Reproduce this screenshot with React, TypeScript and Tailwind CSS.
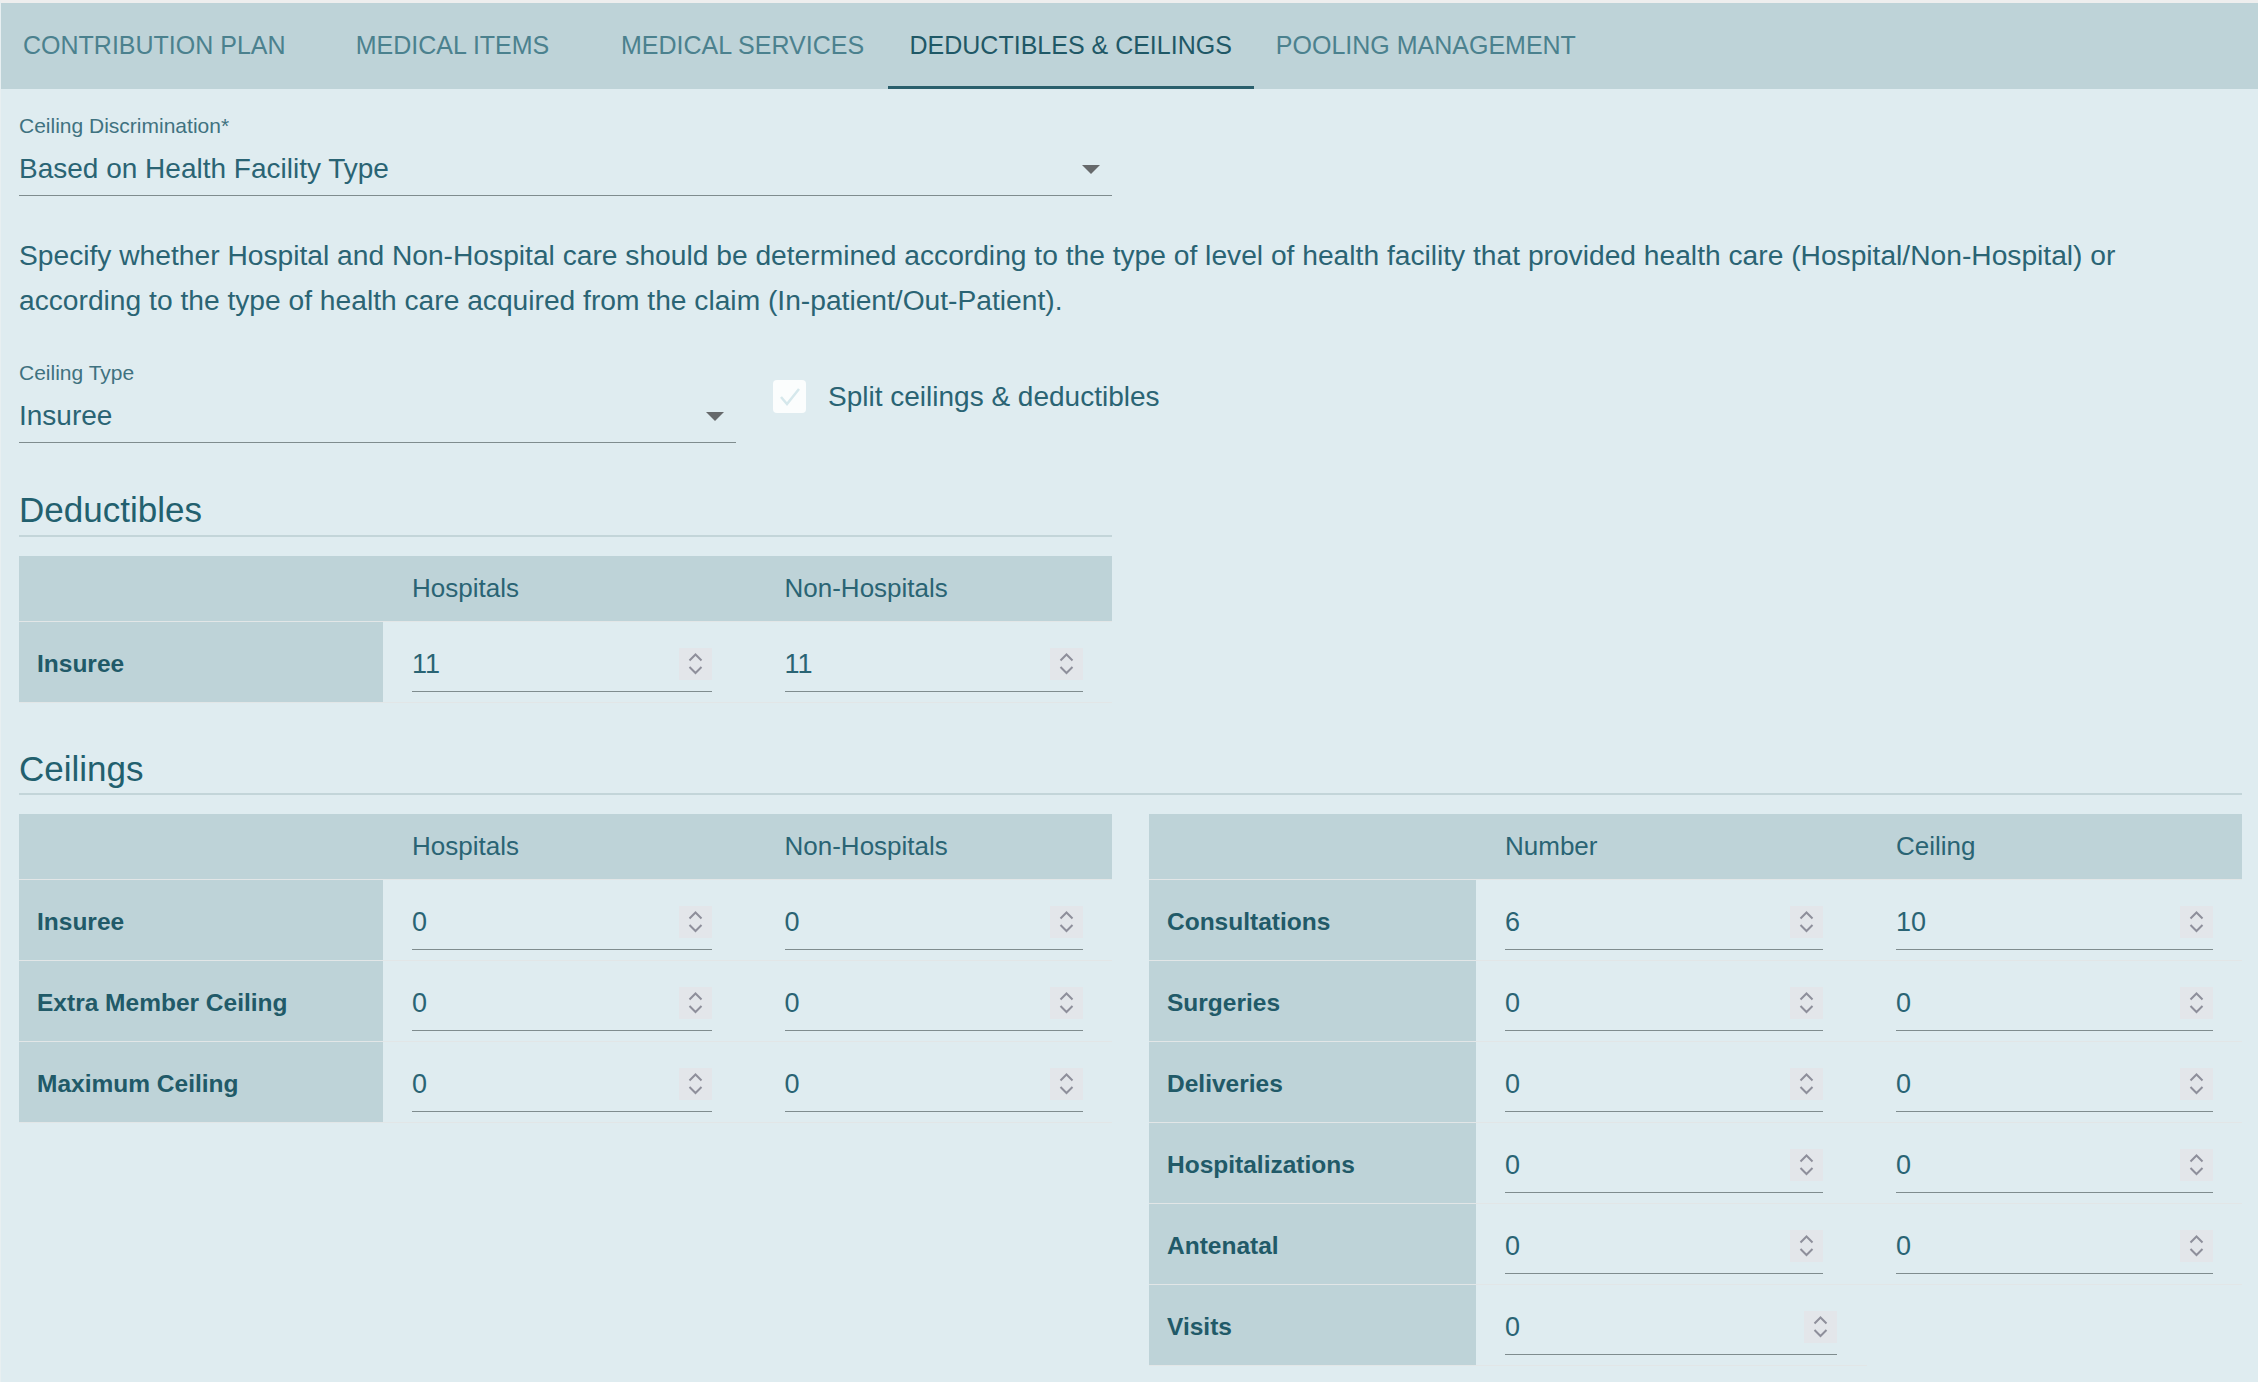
import clsx from "clsx";

const tabs = [
    "Contribution Plan",
    "Medical Items",
    "Medical Services",
    "Deductibles & Ceilings",
    "Pooling Management",
];

const Spinner = () => (
    <span className="flex h-[32px] w-[33px] shrink-0 items-center justify-center bg-[#e3e6ea]">
        <svg width="33" height="32" viewBox="0 0 33 32" fill="none" stroke="#8e8f9b" strokeWidth="2">
            <polyline points="10.5,12.5 16.5,6.5 22.5,12.5" />
            <polyline points="10.5,19 16.5,25 22.5,19" />
        </svg>
    </span>
);

const NumberField = ({ value }: { value: string }) => (
    <div className="flex h-[47px] items-center justify-between border-b border-[#7f8c8e] pb-[8px] text-[27px] text-[#2a6474]">
        <span>{value}</span>
        <Spinner />
    </div>
);

const SelectField = ({ label, value, width }: { label: string; value: string; width: string }) => (
    <div className={width}>
        <p className="text-[21px] leading-[24px] text-[#3f7280]">{label}</p>
        <div className="mt-[9px] flex h-[49px] items-center justify-between border-b border-[#7f8c8e] pb-[4px]">
            <span className="text-[28px] text-[#2a6474]">{value}</span>
            <svg width="18" height="9" viewBox="0 0 18 9" className="mr-[12px]">
                <polygon points="0,0 18,0 9,9" fill="#66696b" />
            </svg>
        </div>
    </div>
);

type Row = { label: string; values: string[] };

const ValueTable = ({ cols, headers, rows }: { cols: string; headers: string[]; rows: Row[] }) => (
    <div className="w-[1093px]">
        <div className={clsx("grid h-[66px] items-center border-b border-[#e2e6e7] bg-[#bed3d8] text-[26px] text-[#2a6474]", cols)}>
            <div />
            <p className="pl-[29px] pr-[36px]">{headers[0]}</p>
            <p className="pl-[37px] pr-[29px]">{headers[1]}</p>
        </div>
        {rows.map((row, index) =>
            row.values.length === 2 ? (
                <div key={index} className={clsx("grid h-[81px] border-b border-[#e2e6e7]", cols)}>
                    <div className="flex items-center bg-[#bed3d8] pl-[18px] pt-[4px] text-[24.5px] font-bold text-[#215a68]">
                        {row.label}
                    </div>
                    <div className="pl-[29px] pr-[36px] pt-[23px]">
                        <NumberField value={row.values[0]} />
                    </div>
                    <div className="pl-[37px] pr-[29px] pt-[23px]">
                        <NumberField value={row.values[1]} />
                    </div>
                </div>
            ) : (
                <div key={index} className="grid h-[81px] w-[718px] grid-cols-[327px_391px] border-b border-[#e2e6e7]">
                    <div className="flex items-center bg-[#bed3d8] pl-[18px] pt-[4px] text-[24.5px] font-bold text-[#215a68]">
                        {row.label}
                    </div>
                    <div className="pl-[29px] pr-[30px] pt-[23px]">
                        <NumberField value={row.values[0]} />
                    </div>
                </div>
            )
        )}
    </div>
);

const App = () => {
    return (
        <div className="min-h-screen border-l border-t-[3px] border-l-[#e8eff1] border-t-[#eeeeee] bg-[#dfecf0] font-[family-name:Liberation_Sans,Arial,sans-serif]">
            <div className="flex h-[86px] bg-[#bed3d8]">
                {tabs.map((tab, index) => (
                    <div
                        key={tab}
                        className={clsx(
                            "flex min-w-[290px] items-center justify-center px-[22px] pt-[3px] text-[25px] uppercase",
                            index === 3
                                ? "border-b-[3px] border-[#2a5f6c] text-[#1f5866]"
                                : "border-b-[3px] border-transparent text-[#4b818e]"
                        )}
                    >
                        {tab}
                    </div>
                ))}
            </div>

            <div className="pl-[18px] pr-[16px] pb-[18px]">
                <div className="pt-[25px]">
                    <SelectField label="Ceiling Discrimination*" value="Based on Health Facility Type" width="w-[1093px]" />
                </div>

                <p className="mt-[37px] max-w-[2180px] text-[28.2px] leading-[45px] text-[#2a6474]">
                    Specify whether Hospital and Non-Hospital care should be determined according to the type of level of health facility that provided health care (Hospital/Non-Hospital) or according to the type of health care acquired from the claim (In-patient/Out-Patient).
                </p>

                <div className="mt-[38px] flex">
                    <SelectField label="Ceiling Type" value="Insuree" width="w-[717px]" />
                    <div className="ml-[37px] mt-[19px] flex h-[33px] items-center gap-[22px]">
                        <span className="flex h-[33px] w-[33px] items-center justify-center rounded-[4px] bg-[#fbfdfd]">
                            <svg width="26" height="26" viewBox="0 0 26 26" fill="none" stroke="#d6e8ec" strokeWidth="2.5">
                                <polyline points="4,13 10,20 22,5" />
                            </svg>
                        </span>
                        <span className="text-[28px] text-[#2a6474]">Split ceilings &amp; deductibles</span>
                    </div>
                </div>

                <div className="mt-[46px] w-[1093px]">
                    <h2 className="border-b-2 border-[#c3d5d9] pb-[4px] text-[35px] leading-[42px] text-[#22606e]">Deductibles</h2>
                    <div className="mt-[19px]">
                        <ValueTable
                            cols="grid-cols-[364px_1fr_1fr]"
                            headers={["Hospitals", "Non-Hospitals"]}
                            rows={[{ label: "Insuree", values: ["11", "11"] }]}
                        />
                    </div>
                </div>

                <h2 className="mt-[45px] border-b-2 border-[#c3d5d9] pb-[3px] text-[35px] leading-[42px] text-[#22606e]">Ceilings</h2>
                <div className="mt-[19px] flex gap-[37px]">
                    <ValueTable
                        cols="grid-cols-[364px_1fr_1fr]"
                        headers={["Hospitals", "Non-Hospitals"]}
                        rows={[
                            { label: "Insuree", values: ["0", "0"] },
                            { label: "Extra Member Ceiling", values: ["0", "0"] },
                            { label: "Maximum Ceiling", values: ["0", "0"] },
                        ]}
                    />
                    <ValueTable
                        cols="grid-cols-[327px_1fr_1fr]"
                        headers={["Number", "Ceiling"]}
                        rows={[
                            { label: "Consultations", values: ["6", "10"] },
                            { label: "Surgeries", values: ["0", "0"] },
                            { label: "Deliveries", values: ["0", "0"] },
                            { label: "Hospitalizations", values: ["0", "0"] },
                            { label: "Antenatal", values: ["0", "0"] },
                            { label: "Visits", values: ["0"] },
                        ]}
                    />
                </div>
            </div>
        </div>
    );
};

export default App;
